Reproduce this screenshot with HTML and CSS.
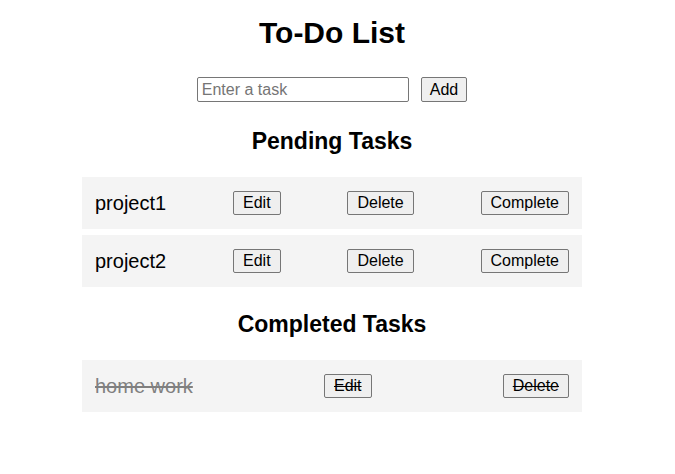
FILE: index.html
```html
<!DOCTYPE html>
<html>
<head>
<meta charset="utf-8">
<link rel="stylesheet" href="styles.css">
</head>
<body>
<div class="app">
  <h1 class="title">To-Do List</h1>
  <div class="add-row">
    <input class="task-input" type="text" placeholder="Enter a task">
    <button class="btn">Add</button>
  </div>
  <h2 class="section-title">Pending Tasks</h2>
  <ul class="task-list">
    <li class="task"><span class="task-text">project1</span><button class="btn">Edit</button><button class="btn">Delete</button><button class="btn">Complete</button></li>
    <li class="task"><span class="task-text">project2</span><button class="btn">Edit</button><button class="btn">Delete</button><button class="btn">Complete</button></li>
  </ul>
  <h2 class="section-title completed-title">Completed Tasks</h2>
  <ul class="task-list">
    <li class="task done"><span class="task-text">home work</span><button class="btn">Edit</button><button class="btn">Delete</button></li>
  </ul>
</div>
</body>
</html>
```
FILE: styles.css
```css
html, body {
  margin: 0;
  padding: 0;
  background: #fff;
}
body {
  font-family: "Liberation Sans", Arial, sans-serif;
  color: #000;
  padding: 16px 11px 0 0;
}
.app {
  width: 500px;
  margin: 0 auto;
  display: flex;
  flex-direction: column;
  align-items: stretch;
}
.title {
  font-size: 30px;
  font-weight: bold;
  text-align: center;
  margin: 0;
  line-height: 33px;
}
.add-row {
  display: flex;
  justify-content: center;
  gap: 12px;
  margin-top: 28px;
}
.task-input {
  box-sizing: border-box;
  width: 212px;
  height: 25px;
  border: 1px solid #767676;
  border-radius: 2px;
  padding: 2px 4px;
  font-family: "Liberation Sans", Arial, sans-serif;
  font-size: 16px;
}
.task-input::placeholder {
  color: #757575;
}
.btn {
  box-sizing: border-box;
  font-family: "Liberation Sans", Arial, sans-serif;
  font-size: 16px;
  line-height: 18px;
  height: 24px;
  padding: 2px 9px;
  border: 1px solid #767676;
  border-radius: 2px;
  background: #efefef;
  color: #000;
}
.add-row .btn {
  height: 25px;
  padding: 2px 8px;
}
.section-title {
  font-size: 23px;
  font-weight: bold;
  text-align: center;
  margin: 26px 0 0;
  line-height: 26px;
}
.completed-title {
  margin-top: 24px;
}
.task-list {
  list-style: none;
  margin: 23px 0 0;
  padding: 0;
  display: flex;
  flex-direction: column;
  gap: 6px;
}
.task {
  display: flex;
  justify-content: space-between;
  align-items: center;
  background: #f4f4f4;
  padding: 0 13px;
  height: 52px;
}
.task-text {
  font-size: 20px;
}
.done .task-text {
  color: #808080;
  text-decoration: line-through;
}
.done .btn {
  text-decoration: line-through;
}
```
